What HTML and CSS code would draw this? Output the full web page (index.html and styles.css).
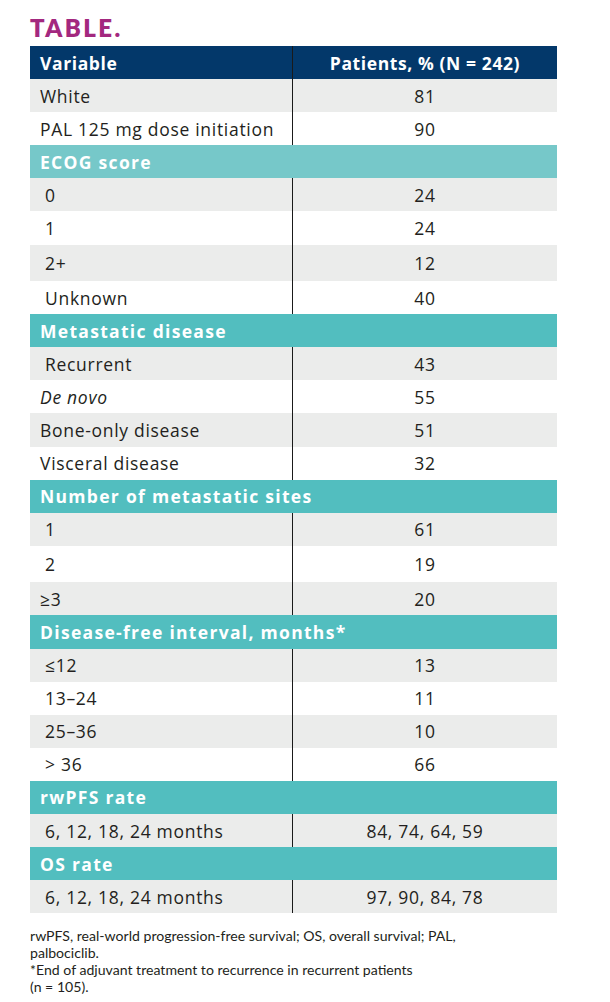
FILE: index.html
```html
<!DOCTYPE html>
<html>
<head>
<meta charset="utf-8">
<link rel="stylesheet" href="styles.css">
</head>
<body>
<div class="page">
  <h1 class="title">TABLE.</h1>
  <table class="data">
    <thead>
      <tr class="head"><th class="c1">Variable</th><th class="c2">Patients, % (N = 242)</th></tr>
    </thead>
    <tbody>
      <tr class="g"><td class="c1">White</td><td class="c2">81</td></tr>
      <tr class="w"><td class="c1">PAL 125 mg dose initiation</td><td class="c2">90</td></tr>
      <tr class="sec light"><td colspan="2">ECOG score</td></tr>
      <tr class="g"><td class="c1 ind">0</td><td class="c2">24</td></tr>
      <tr class="w"><td class="c1 ind">1</td><td class="c2">24</td></tr>
      <tr class="g tall"><td class="c1 ind">2+</td><td class="c2">12</td></tr>
      <tr class="w"><td class="c1 ind">Unknown</td><td class="c2">40</td></tr>
      <tr class="sec"><td colspan="2">Metastatic disease</td></tr>
      <tr class="g"><td class="c1 ind">Recurrent</td><td class="c2">43</td></tr>
      <tr class="w"><td class="c1"><em>De novo</em></td><td class="c2">55</td></tr>
      <tr class="g"><td class="c1">Bone-only disease</td><td class="c2">51</td></tr>
      <tr class="w"><td class="c1">Visceral disease</td><td class="c2">32</td></tr>
      <tr class="sec"><td colspan="2">Number of metastatic sites</td></tr>
      <tr class="g"><td class="c1 ind">1</td><td class="c2">61</td></tr>
      <tr class="w tall"><td class="c1 ind">2</td><td class="c2">19</td></tr>
      <tr class="g"><td class="c1">≥3</td><td class="c2">20</td></tr>
      <tr class="sec"><td colspan="2">Disease-free interval, months*</td></tr>
      <tr class="g"><td class="c1 ind">≤12</td><td class="c2">13</td></tr>
      <tr class="w"><td class="c1 ind">13–24</td><td class="c2">11</td></tr>
      <tr class="g"><td class="c1 ind">25–36</td><td class="c2">10</td></tr>
      <tr class="w"><td class="c1 ind">&gt; 36</td><td class="c2">66</td></tr>
      <tr class="sec"><td colspan="2">rwPFS rate</td></tr>
      <tr class="g"><td class="c1 ind">6, 12, 18, 24 months</td><td class="c2">84, 74, 64, 59</td></tr>
      <tr class="sec"><td colspan="2">OS rate</td></tr>
      <tr class="g"><td class="c1 ind">6, 12, 18, 24 months</td><td class="c2">97, 90, 84, 78</td></tr>
    </tbody>
  </table>
  <div class="notes">
    <p>rwPFS, real-world progression-free survival; OS, overall survival; PAL, palbociclib.</p>
    <p>*End of adjuvant treatment to recurrence in recurrent patients (n&nbsp;=&nbsp;105).</p>
  </div>
</div>
</body>
</html>
```

FILE: styles.css
```css
html, body {
  margin: 0;
  padding: 0;
  background: #ffffff;
}

.page {
  padding: 14px 0 0 30px;
  width: 527px;
  font-family: "Open Sans", Lato, "Liberation Sans", sans-serif;
  color: #231f20;
}

.title {
  margin: 0;
  height: 32px;
  font-family: Lato, "Liberation Sans", sans-serif;
  font-size: 24px;
  line-height: 28px;
  font-weight: 800;
  letter-spacing: 2.4px;
  color: #a3287f;
}

.data {
  width: 527px;
  border-collapse: collapse;
  table-layout: fixed;
  font-size: 17.5px;
  letter-spacing: 0.7px;
}

.data th,
.data td {
  padding: 0 10px;
  height: 33.1px;
  line-height: 20px;
  vertical-align: middle;
  white-space: nowrap;
}

.c1 {
  width: 242px;
  text-align: left;
}

.c2 {
  text-align: center;
  border-left: 1px solid #1a1a1a;
}

.ind {
  padding-left: 15px !important;
}

.head th {
  background: #03386a;
  color: #ffffff;
  font-weight: 700;
  letter-spacing: 0.6px;
}

.g td {
  background: #ebeceb;
}

.w td {
  background: #ffffff;
}

.tall td {
  height: 36.5px;
}

.sec td {
  background: #52bebf;
  color: #ffffff;
  font-weight: 700;
  letter-spacing: 1.3px;
}

.sec.light td {
  background: #76c8c9;
}

.notes {
  margin-top: 14px;
  width: 440px;
  font-family: Lato, "Liberation Sans", sans-serif;
  font-size: 14.1px;
  line-height: 17px;
  color: #231f20;
}

.notes p {
  margin: 0;
}
```
